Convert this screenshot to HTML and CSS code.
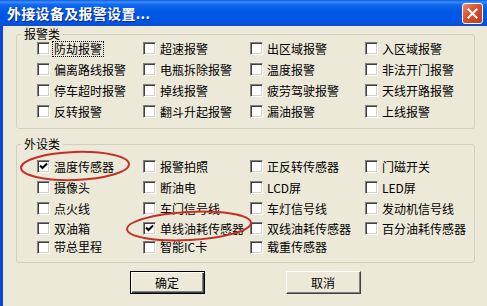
FILE: index.html
```html
<!DOCTYPE html>
<html lang="zh-CN">
<head>
    <meta charset="UTF-8">
    <title>外接设备及报警设置</title>
    <link rel="stylesheet" href="styles.css">
</head>
<body>

    <div class="window">
        <div class="titlebar">
            <span class="title">外接设备及报警设置...</span>
            <button class="close-btn" aria-label="关闭">
                <svg width="11" height="11" viewBox="0 0 11 11"><path d="M1.5 1.5 L9.5 9.5 M9.5 1.5 L1.5 9.5" stroke="#fff" stroke-width="2" stroke-linecap="square"/></svg>
            </button>
        </div>

        <div class="client">
            <fieldset class="group">
                <legend>报警类</legend>
                <div class="grid">
                    <label class="chk"><span class="box"></span><span class="txt focus">防劫报警</span></label>
                    <label class="chk"><span class="box"></span><span class="txt">超速报警</span></label>
                    <label class="chk"><span class="box"></span><span class="txt">出区域报警</span></label>
                    <label class="chk"><span class="box"></span><span class="txt">入区域报警</span></label>

                    <label class="chk"><span class="box"></span><span class="txt">偏离路线报警</span></label>
                    <label class="chk"><span class="box"></span><span class="txt">电瓶拆除报警</span></label>
                    <label class="chk"><span class="box"></span><span class="txt">温度报警</span></label>
                    <label class="chk"><span class="box"></span><span class="txt">非法开门报警</span></label>

                    <label class="chk"><span class="box"></span><span class="txt">停车超时报警</span></label>
                    <label class="chk"><span class="box"></span><span class="txt">掉线报警</span></label>
                    <label class="chk"><span class="box"></span><span class="txt">疲劳驾驶报警</span></label>
                    <label class="chk"><span class="box"></span><span class="txt">天线开路报警</span></label>

                    <label class="chk"><span class="box"></span><span class="txt">反转报警</span></label>
                    <label class="chk"><span class="box"></span><span class="txt">翻斗升起报警</span></label>
                    <label class="chk"><span class="box"></span><span class="txt">漏油报警</span></label>
                    <label class="chk"><span class="box"></span><span class="txt">上线报警</span></label>
                </div>
            </fieldset>

            <fieldset class="group group-ext">
                <legend>外设类</legend>
                <div class="grid">
                    <label class="chk"><span class="box"><svg class="tick" width="9" height="9" viewBox="0 0 9 9"><path d="M1 3.5 L3.5 6 L8 1.5" fill="none" stroke="#000" stroke-width="2"/></svg></span><span class="txt">温度传感器</span></label>
                    <label class="chk"><span class="box"></span><span class="txt">报警拍照</span></label>
                    <label class="chk"><span class="box"></span><span class="txt">正反转传感器</span></label>
                    <label class="chk"><span class="box"></span><span class="txt">门磁开关</span></label>

                    <label class="chk"><span class="box"></span><span class="txt">摄像头</span></label>
                    <label class="chk"><span class="box"></span><span class="txt">断油电</span></label>
                    <label class="chk"><span class="box"></span><span class="txt">LCD屏</span></label>
                    <label class="chk"><span class="box"></span><span class="txt">LED屏</span></label>

                    <label class="chk"><span class="box"></span><span class="txt">点火线</span></label>
                    <label class="chk"><span class="box"></span><span class="txt">车门信号线</span></label>
                    <label class="chk"><span class="box"></span><span class="txt">车灯信号线</span></label>
                    <label class="chk"><span class="box"></span><span class="txt">发动机信号线</span></label>

                    <label class="chk"><span class="box"></span><span class="txt">双油箱</span></label>
                    <label class="chk"><span class="box"><svg class="tick" width="9" height="9" viewBox="0 0 9 9"><path d="M1 3.5 L3.5 6 L8 1.5" fill="none" stroke="#000" stroke-width="2"/></svg></span><span class="txt">单线油耗传感器</span></label>
                    <label class="chk"><span class="box"></span><span class="txt">双线油耗传感器</span></label>
                    <label class="chk"><span class="box"></span><span class="txt">百分油耗传感器</span></label>

                    <label class="chk"><span class="box"></span><span class="txt">带总里程</span></label>
                    <label class="chk"><span class="box"></span><span class="txt">智能IC卡</span></label>
                    <label class="chk"><span class="box"></span><span class="txt">载重传感器</span></label>
                </div>
            </fieldset>

            <div class="actions">
                <button class="btn btn-default">确定</button>
                <button class="btn">取消</button>
            </div>
        </div>

        <!-- red marks drawn over the dialog -->
        <svg class="marks" width="487" height="306" viewBox="0 0 487 306">
            <ellipse cx="75" cy="166" rx="54" ry="14" transform="rotate(-2 75 166)" fill="none" stroke="#C62E28" stroke-width="2"/>
            <ellipse cx="189" cy="226" rx="62" ry="14" transform="rotate(-3 189 226)" fill="none" stroke="#C62E28" stroke-width="2"/>
        </svg>
    </div>

</body>
</html>
```

FILE: styles.css
```css
body {
    margin: 0;
    background-color: #ECE9D8;
    font-family: "Noto Sans CJK SC", "Liberation Sans", sans-serif;
    font-size: 12px;
    color: #000;
    overflow: hidden;
}

.window {
    position: relative;
    width: 487px;
    height: 306px;
    display: flex;
    flex-direction: column;
}

.titlebar {
    height: 26px;
    flex: none;
    display: flex;
    align-items: center;
    justify-content: space-between;
    padding: 0 4px 0 7px;
    background: linear-gradient(to bottom, #0A5FE4 0%, #3E8DF8 8%, #1068EE 18%, #0058E6 45%, #0055E5 80%, #0A4FD6 100%);
}

.title {
    color: #fff;
    font-weight: bold;
    font-size: 14px;
    line-height: 16px;
    text-shadow: 1px 1px 0 #0A2A8C;
    letter-spacing: 0.3px;
}

.close-btn {
    width: 21px;
    height: 21px;
    padding: 0;
    display: flex;
    align-items: center;
    justify-content: center;
    border: 1px solid #fff;
    border-radius: 3px;
    background: linear-gradient(135deg, #E98A6B 0%, #D9502D 45%, #C23A18 100%);
    margin-top: 1px;
}

.client {
    flex: 1;
    border-left: 3px solid #0A46D9;
    display: flex;
    flex-direction: column;
}

.group {
    margin: 1px 12px 0 13px;
    padding: 0;
    border: 1px solid #D0D0BF;
    border-radius: 3px;
    min-width: 0;
}

.group legend {
    margin-left: 4px;
    padding: 0 3px;
    line-height: 14px;
}

.grid {
    display: grid;
    grid-template-columns: 106px 107px 115px 1fr;
    grid-auto-rows: 21px;
    padding: 0 0 6px 20px;
    margin-top: -3px;
}

.group-ext {
    margin-top: 8px;
}

.group-ext .grid {
    grid-template-rows: 21px 21px 21px 19px 18px;
    padding-top: 5px;
    padding-bottom: 6px;
    margin-top: 0;
}

.chk {
    display: flex;
    align-items: center;
    gap: 3px;
    white-space: nowrap;
}

.box {
    width: 13px;
    height: 13px;
    box-sizing: border-box;
    flex: none;
    display: flex;
    align-items: center;
    justify-content: center;
    background-color: #fff;
    border: 1px solid;
    border-color: #808080 #fff #fff #808080;
    box-shadow: inset 1px 1px #404040, inset -1px -1px #D4D0C8;
}

.txt {
    padding: 0 1px;
    line-height: 14px;
}

.focus {
    outline: 1px dotted #000;
    outline-offset: 0;
}

.actions {
    display: flex;
    justify-content: center;
    gap: 81px;
    margin-top: 8px;
}

.btn {
    width: 75px;
    height: 23px;
    padding: 0;
    font-family: inherit;
    font-size: 12px;
    background-color: #ECE9D8;
    border: 1px solid;
    border-color: #fff #404040 #404040 #fff;
    box-shadow: inset -1px -1px #808080;
}

.btn-default {
    border: 1px solid #000;
    box-shadow: inset 1px 1px #fff, inset -1px -1px #404040, inset -2px -2px #808080;
}

.marks {
    position: absolute;
    left: 0;
    top: 0;
    pointer-events: none;
}
```
